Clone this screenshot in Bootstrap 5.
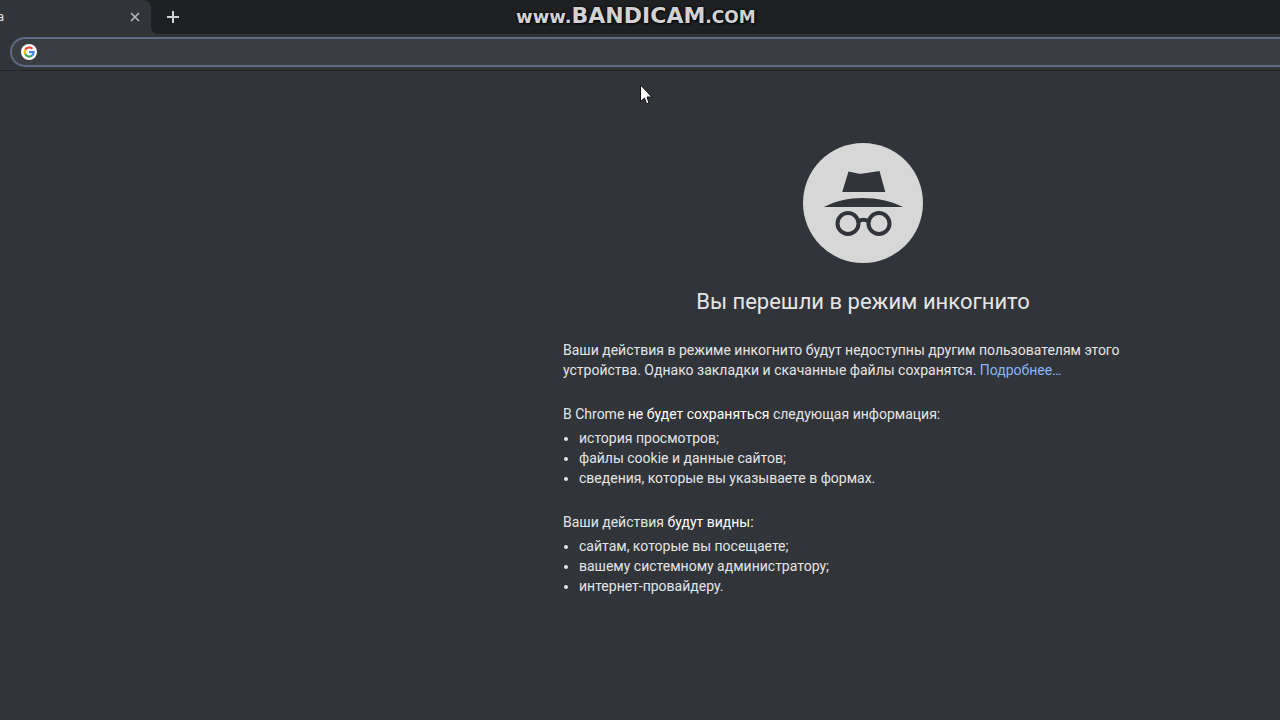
<!DOCTYPE html>
<html lang="ru">
<head>
<meta charset="utf-8">
<meta name="viewport" content="width=device-width, initial-scale=1">
<title>Новая вкладка</title>
<link href="https://cdn.jsdelivr.net/npm/bootstrap@5.3.0/dist/css/bootstrap.min.css" rel="stylesheet">
<style>
  body { background: #313439; color: #e4e5e7; font-family: Roboto, "Noto Sans", sans-serif; font-size: 14px; line-height: 20px; }
  .tab-strip { height: 34px; background: #1f2022; }
  .active-tab { width: 151px; background: #313439; border-top-right-radius: 8px; font-size: 12px; }
  .active-tab::after { content: ""; position: absolute; left: 100%; bottom: 0; width: 8px; height: 8px; background: radial-gradient(circle at 100% 0, transparent 8px, #313439 8px); }
  .tab-name { width: 4px; overflow: hidden; direction: rtl; }
  .icon-button { background: none; border: 0; padding: 0; width: 16px; height: 16px; }
  .icon-button svg, .search-logo, .incognito-logo, .pointer { display: block; }
  .toolbar { padding: 3px 0 3px 10px; border-bottom: 1px solid #222326; background: #313439; }
  .address-bar { height: 30px; background: #3a3d41; border: 2px solid #5f6b84; border-right: 0; border-radius: 15px 0 0 15px; padding-left: 9px; }
  .address-bar input, .address-bar input:focus { background: transparent; border: 0; color: #e4e5e7; font-size: 14px; outline: 0; box-shadow: none; }
  .page-area { padding: 72px 0 24px 446px; }
  .notice { max-width: 600px; }
  h1 { font-size: 22px; line-height: 28px; margin: 25px 0 24px; }
  .notice p, .notice ul { margin: 0; }
  .notice ul { padding: 4px 0 0 16px; }
  .notice section { margin-top: 24px; }
  .notice strong { font-weight: 400; color: #fff; }
  .notice a { color: #8ab4f8; }
  .watermark { top: 2px; left: 516px; font: bold 18px/28px "DejaVu Sans", sans-serif; color: #d2d2d2; text-shadow: 0 0 3px #000, 1px 1px 2px #000; pointer-events: none; }
  .watermark b { font-size: 22px; }
  .watermark small { font-size: 17px; }
  .pointer { top: 84px; left: 640px; pointer-events: none; }
</style>
</head>
<body class="position-relative">
<header>
  <nav class="tab-strip d-flex align-items-center" aria-label="Вкладки">
    <div class="active-tab position-relative h-100 d-flex align-items-center justify-content-between">
      <span class="tab-name">а</span>
      <button class="icon-button me-2" type="button" aria-label="Закрыть вкладку">
        <svg width="16" height="16" viewBox="0 0 16 16" stroke="#b4b6b9" stroke-width="1.7"><path d="M4 4l8 8M12 4l-8 8"/></svg>
      </button>
    </div>
    <button class="icon-button ms-3" type="button" aria-label="Новая вкладка">
      <svg width="16" height="16" viewBox="0 0 16 16" stroke="#d0d1d4" stroke-width="2"><path d="M6 2v12M0 8h12"/></svg>
    </button>
  </nav>
  <form class="toolbar">
    <div class="address-bar d-flex align-items-center">
      <svg class="search-logo flex-shrink-0" width="16" height="16" viewBox="0 0 16 16">
        <circle cx="8" cy="8" r="8" fill="#fff"/>
        <g fill="none" stroke-width="2.2">
          <path d="M4.3 5.6A4.6 4.6 0 0 1 11.4 4.8" stroke="#ea4335"/>
          <path d="M4.3 10.4A4.6 4.6 0 0 1 4.3 5.6" stroke="#fbbc05"/>
          <path d="M11.1 11.5A4.6 4.6 0 0 1 4.2 10.3" stroke="#34a853"/>
          <path d="M8 8.2H12.6A4.6 4.6 0 0 1 11 11.5" stroke="#4285f4"/>
        </g>
      </svg>
      <input class="form-control py-0" type="text" aria-label="Адресная строка">
    </div>
  </form>
</header>
<main class="page-area">
  <div class="notice mx-auto">
    <svg class="incognito-logo mx-auto" width="120" height="120" viewBox="0 0 120 120" fill="#313439">
      <circle cx="60" cy="60" r="60" fill="#d7d7d8"/>
      <path d="M45.500 28.500L56 30.800Q58 31 60 30.600L76.500 28L82.300 49H39.200Z"/>
      <path d="M21 64C43 52 76 52 100 64Z"/>
      <g fill="none" stroke="#313439" stroke-width="4"><circle cx="45" cy="80.500" r="10.500"/><circle cx="76" cy="80.500" r="10.500"/><path d="M55.500 78.500Q60.500 75 65.500 78.500"/></g>
    </svg>
    <h1 class="text-center fw-normal">Вы перешли в режим инкогнито</h1>
    <p>Ваши действия в режиме инкогнито будут недоступны другим пользователям этого устройства. Однако закладки и скачанные файлы сохранятся. <a class="text-decoration-none" href="#">Подробнее…</a></p>
    <section>
      <p>В Chrome <strong>не будет сохраняться</strong> следующая информация:</p>
      <ul>
        <li>история просмотров;</li>
        <li>файлы cookie и данные сайтов;</li>
        <li>сведения, которые вы указываете в формах.</li>
      </ul>
    </section>
    <section>
      <p>Ваши действия <strong>будут видны:</strong></p>
      <ul>
        <li>сайтам, которые вы посещаете;</li>
        <li>вашему системному администратору;</li>
        <li>интернет-провайдеру.</li>
      </ul>
    </section>
  </div>
</main>
<div class="watermark position-absolute text-nowrap">www.<b>BANDICAM</b><small>.COM</small></div>
<svg class="pointer position-absolute" width="14" height="21" viewBox="0 0 14 21"><path d="M.5 1V17.500L4.500 14L6.500 20L9 19L7 13H12Z" fill="#fff" stroke="#111"/></svg>
<script src="https://cdn.jsdelivr.net/npm/bootstrap@5.3.0/dist/js/bootstrap.bundle.min.js"></script>
</body>
</html>
